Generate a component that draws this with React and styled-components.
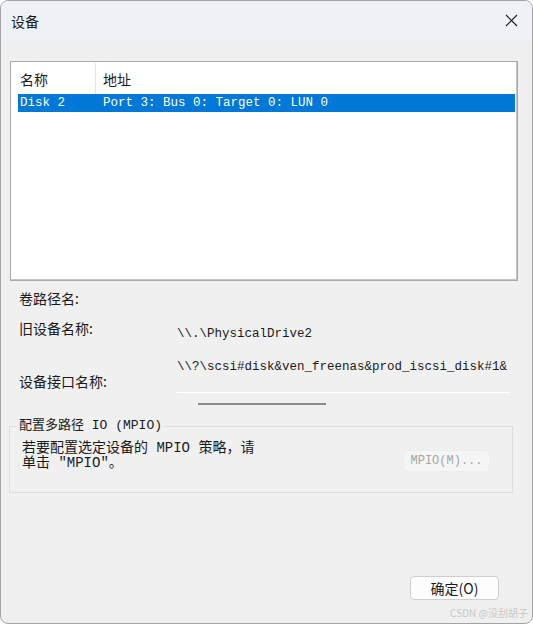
import React from "react";
import styled, { createGlobalStyle, css } from "styled-components";

const GlobalStyle = createGlobalStyle`
  html, body {
    margin: 0;
    padding: 0;
    background: #ffffff;
  }
  * {
    box-sizing: border-box;
  }
`;

const sans = `"Noto Sans CJK SC", "Noto Sans", sans-serif`;
const mono = `"Liberation Mono", "Noto Sans CJK SC", monospace`;

const Window = styled.div`
  width: 533px;
  height: 624px;
  display: flex;
  flex-direction: column;
  background: #f0f0f0;
  border: 1px solid #a3a3a3;
  border-radius: 8px;
  overflow: hidden;
  font-family: ${sans};
  color: #1a1a1a;
`;

const TitleBar = styled.div`
  height: 39px;
  flex-shrink: 0;
  display: flex;
  align-items: center;
  justify-content: space-between;
  padding: 0 14px 0 10px;
  background: #eef2f6;
`;

const Title = styled.span`
  font-size: 14px;
  font-family: ${mono};
`;

const CloseIcon = () => (
  <svg width="13" height="13" viewBox="0 0 13 13">
    <path d="M1 1L12 12M12 1L1 12" stroke="#1a1a1a" strokeWidth="1.1" />
  </svg>
);

const Body = styled.div`
  flex: 1;
  display: flex;
  flex-direction: column;
  padding: 21px 14px 0 9px;
`;

const ListBox = styled.div`
  height: 220px;
  background: #ffffff;
  border: 1px solid #a8a8b0;
  box-shadow: inset -1px -1px 0 #c4c4cc;
  padding: 1px 2px 0 2px;
`;

const HeaderRow = styled.div`
  height: 31px;
  display: grid;
  grid-template-columns: 83px 1fr;
  font-size: 14px;
`;

const HeaderCell = styled.div`
  display: flex;
  align-items: center;
  padding-left: 7px;
  ${(p) =>
    p.first &&
    css`
      border-right: 1px solid #e5e5e5;
    `}
`;

const ItemRow = styled.div`
  height: 18px;
  margin-left: 5px;
  display: grid;
  grid-template-columns: 83px 1fr;
  align-items: center;
  font-family: ${mono};
  font-size: 12.5px;
  color: #ffffff;
  background: ${(p) => (p.selected ? "#0078d7" : "transparent")};
  padding-left: 2px;
`;

const Info = styled.div`
  display: flex;
  flex-direction: column;
  padding-left: 9px;
`;

const InfoRow = styled.div`
  display: grid;
  grid-template-columns: 158px 1fr;
  height: ${(p) => p.h}px;
`;

const Label = styled.div`
  font-size: 14px;
  line-height: 18px;
  margin-top: ${(p) => p.top || 0}px;
  color: #1a1a1a;
`;

const Value = styled.div`
  font-family: ${mono};
  font-size: 12.5px;
  line-height: 16px;
  margin-top: ${(p) => p.top || 0}px;
  white-space: nowrap;
  color: #1a1a1a;
`;

const Separator = styled.div`
  height: 1px;
  width: 333px;
  background: #ffffff;
  margin-top: 17px;
`;

const ScrollThumb = styled.div`
  width: 128px;
  height: 2px;
  background: #8a8a8a;
  margin: 10px 0 0 21px;
`;

const Group = styled.fieldset`
  margin: 11px 0 0 -1px;
  width: 504px;
  height: 75px;
  border: 1px solid #dcdcdc;
  padding: 0 21px 0 12px;
  display: flex;
  align-items: flex-start;
  justify-content: space-between;
`;

const Legend = styled.legend`
  font-family: ${mono};
  font-size: 13px;
  line-height: 16px;
  padding: 0 2px;
  margin-left: -5px;
`;

const GroupText = styled.div`
  font-family: ${mono};
  font-size: 14px;
  line-height: 14.5px;
  margin-top: 7px;
  width: 250px;
`;

const Button = styled.button`
  font-family: ${(p) => (p.disabled ? mono : sans)};
  font-size: ${(p) => (p.disabled ? "12px" : "14px")};
  width: ${(p) => p.w}px;
  height: ${(p) => p.hgt}px;
  padding: 0;
  border-radius: 4px;
  ${(p) =>
    p.disabled
      ? css`
          background: #f5f5f5;
          color: #a6a6a6;
          border: 1px solid #ededed;
        `
      : css`
          background: #fdfdfd;
          color: #1a1a1a;
          border: 1px solid #cfcfcf;
        `}
`;

const MpioButton = styled(Button)`
  margin-top: 16px;
  margin-right: 1px;
`;

const Footer = styled.div`
  margin-top: auto;
  display: flex;
  flex-direction: column;
  align-items: flex-end;
`;

const OkButton = styled(Button)`
  margin-right: 19px;
`;

const Watermark = styled.div`
  font-family: ${sans};
  font-size: 10px;
  line-height: 14px;
  color: #c8c8c8;
  margin: 6px -10px 3px 0;
`;

export default function App() {
  return (
    <>
      <GlobalStyle />
      <Window>
        <TitleBar>
          <Title>设备</Title>
          <CloseIcon />
        </TitleBar>
        <Body>
          <ListBox>
            <HeaderRow>
              <HeaderCell first>名称</HeaderCell>
              <HeaderCell>地址</HeaderCell>
            </HeaderRow>
            <ItemRow selected>
              <span>Disk 2</span>
              <span>Port 3: Bus 0: Target 0: LUN 0</span>
            </ItemRow>
          </ListBox>
          <Info>
            <InfoRow h={32}>
              <Label top={8}>卷路径名:</Label>
            </InfoRow>
            <InfoRow h={46}>
              <Label top={6}>旧设备名称:</Label>
              <Value top={13}>\\.\PhysicalDrive2</Value>
            </InfoRow>
            <InfoRow h={48}>
              <Label top={13}>设备接口名称:</Label>
              <div>
                <Value>\\?\scsi#disk&amp;ven_freenas&amp;prod_iscsi_disk#1&amp;</Value>
                <Separator />
                <ScrollThumb />
              </div>
            </InfoRow>
          </Info>
          <Group>
            <Legend>配置多路径 IO (MPIO)</Legend>
            <GroupText>
              若要配置选定设备的 MPIO 策略，请
              <br />
              单击 "MPIO"。
            </GroupText>
            <MpioButton disabled w={87} hgt={22}>
              MPIO(M)...
            </MpioButton>
          </Group>
          <Footer>
            <OkButton w={89} hgt={24}>
              确定(O)
            </OkButton>
            <Watermark>CSDN @没刮胡子</Watermark>
          </Footer>
        </Body>
      </Window>
    </>
  );
}
